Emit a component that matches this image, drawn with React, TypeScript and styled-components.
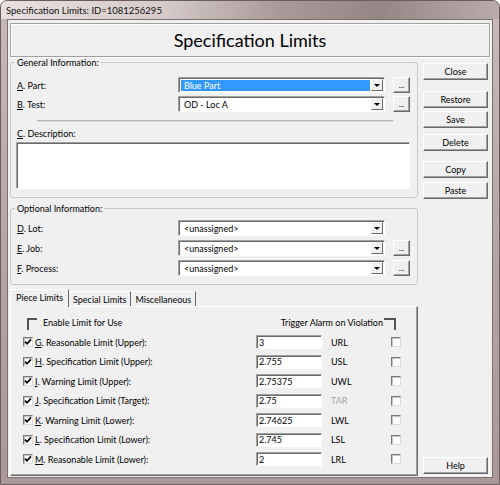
import styled, { createGlobalStyle } from 'styled-components';

const GlobalStyle = createGlobalStyle`
  html, body { margin: 0; padding: 0; background: #fff; }
  body { font-family: Lato, "Liberation Sans", sans-serif; font-size: 9px; color: #000; }
  * { box-sizing: border-box; }
`

const Window = styled.div`
  width: 500px;
  height: 485px;
  display: flex;
  flex-direction: column;
  border: 1px solid #6b5d5c;
  border-radius: 7px 7px 0 0;
  overflow: hidden;
  background: linear-gradient(to bottom, #c7bab9, #b4a4a3 55%, #a99897);
`

const TitleBar = styled.div`
  height: 18px;
  flex: none;
  display: flex;
  align-items: center;
  padding-left: 5px;
  font-size: 9.5px;
  color: #111;
  background: linear-gradient(to right, rgba(240,234,232,.8) 0%, rgba(222,214,212,.65) 32%, rgba(140,122,122,.5) 56%, rgba(100,84,84,.5) 76%, rgba(165,150,150,.4) 100%);
`

const Frame = styled.div`
  flex: 1;
  display: flex;
  padding: 0 6px 6px;
`

const Client = styled.div`
  flex: 1;
  display: flex;
  flex-direction: column;
  background: #f0f0f0;
  border: 1px solid #7d6f6e;
`

const Header = styled.header`
  margin: 3px 2px 0;
  height: 34px;
  flex: none;
  display: flex;
  align-items: center;
  justify-content: center;
  border: 1px solid #a0a0a0;
  box-shadow: inset 1px 1px #fff, 1px 1px #fff;
  > h1 {
    margin: 0;
    font-size: 18px;
    font-weight: 400;
  }
`

const Body = styled.div`
  flex: 1;
  display: flex;
  gap: 5px;
  padding: 0 4px 1px 2px;
`

const LeftCol = styled.div`
  width: 408px;
  display: flex;
  flex-direction: column;
`

const RightCol = styled.div`
  width: 65px;
  display: flex;
  flex-direction: column;
`

const Button = styled.button<{ $top?: number }>`
  height: 17px;
  margin: ${p => (p.$top ?? 0)}px 0 0;
  padding: 0;
  font: inherit;
  background: #f0f0f0;
  border: 1px solid;
  border-color: #fff #696969 #696969 #fff;
  box-shadow: inset -1px -1px #a0a0a0;
  &:last-child { margin-top: auto; margin-bottom: 2px; }
`

const Group = styled.fieldset<{ $top?: number }>`
  margin: ${p => (p.$top ?? 0)}px 0 0;
  padding: 0 7px 8px 6px;
  border: 1px solid #c9c9c9;
  border-radius: 3px;
  min-width: 0;
`

const Legend = styled.legend`
  padding: 0 2px;
  margin-left: -2px;
  line-height: 11px;
`

const FieldRow = styled.div<{ $top?: number }>`
  display: flex;
  align-items: center;
  height: 16px;
  margin-top: ${p => (p.$top ?? 0)}px;
  > label {
    width: 161px;
  }
`

const ComboBox = styled.div`
  width: 207px;
  height: 16px;
  display: flex;
  background: #fff;
  border: 1px solid;
  border-color: #a0a0a0 #fff #fff #a0a0a0;
  box-shadow: inset 1px 1px #696969;
  padding: 1px;
`

const ComboValue = styled.div<{ $selected?: boolean }>`
  flex: 1;
  display: flex;
  align-items: center;
  padding-left: 3px;
  margin: 1px 1px 0 1px;
  background: ${p => (p.$selected ? '#3399ff' : 'transparent')};
  color: ${p => (p.$selected ? '#fff' : '#000')};
`

const DropArrow = styled.span`
  width: 12px;
  display: flex;
  align-items: center;
  justify-content: center;
  background: #f0f0f0;
  border: 1px solid;
  border-color: #f8f8f8 #696969 #696969 #f8f8f8;
  &::after {
    content: '';
    border-left: 3px solid transparent;
    border-right: 3px solid transparent;
    border-top: 3px solid #000;
    margin-top: 1px;
  }
`

const Ellipsis = styled.button<{ $hidden?: boolean }>`
  width: 17px;
  height: 16px;
  margin-left: 8px;
  padding: 0 0 3px;
  font: inherit;
  font-size: 8px;
  line-height: 8px;
  display: flex;
  align-items: flex-end;
  justify-content: center;
  background: #f0f0f0;
  border: 1px solid;
  border-color: #fff #696969 #696969 #fff;
  box-shadow: inset -1px -1px #a0a0a0;
  visibility: ${p => (p.$hidden ? 'hidden' : 'visible')};
`

const Separator = styled.hr`
  margin: 8px 17px 0 20px;
  height: 2px;
  border: none;
  border-top: 1px solid #b4b4b4;
  border-bottom: 1px solid #d8d8d8;
`

const DescLabel = styled.div`
  margin-top: 6px;
  line-height: 11px;
`

const DescBox = styled.div`
  margin: 3px 0 0 -1px;
  width: 394px;
  height: 47px;
  background: #fff;
  border: 1px solid;
  border-color: #a0a0a0 #fff #fff #a0a0a0;
  box-shadow: inset 1px 1px #696969;
`

const TabStrip = styled.div`
  margin-top: 4px;
  display: flex;
  align-items: flex-end;
  height: 17px;
  position: relative;
  z-index: 1;
`

const Tab = styled.div<{ $active?: boolean }>`
  height: ${p => (p.$active ? 18 : 15)}px;
  padding: 0 ${p => (p.$active ? 5 : 4)}px;
  display: flex;
  align-items: center;
  background: #f0f0f0;
  border-top: 1px solid #fff;
  border-left: ${p => (p.$active ? '1px solid #fff' : 'none')};
  border-right: 1px solid #696969;
  margin-bottom: ${p => (p.$active ? -1 : 0)}px;
  padding-bottom: ${p => (p.$active ? 2 : 0)}px;
`

const Panel = styled.div`
  flex: 1;
  padding: 9px 0 0 12px;
  border: 1px solid;
  border-color: #fff #696969 #696969 #fff;
  box-shadow: inset -1px -1px #a0a0a0;
`

const Heading = styled.div`
  width: 378px;
  height: 14px;
  display: flex;
  justify-content: space-between;
  align-items: flex-start;
`

const HeadingText = styled.span<{ $side: 'left' | 'right' }>`
  display: flex;
  align-items: flex-start;
  flex-direction: ${p => (p.$side === 'left' ? 'row' : 'row-reverse')};
  margin: ${p => (p.$side === 'left' ? '0 0 0 4px' : '0 5px 0 0')};
  line-height: 11px;
  padding-top: 1px;
`

const Bracket = styled.i<{ $side: 'left' | 'right' }>`
  width: ${p => (p.$side === 'left' ? 10 : 12)}px;
  height: 12px;
  margin: 1px ${p => (p.$side === 'left' ? '6px 0 0' : '0 0 1px')};
  border-top: 2px solid #555;
  ${p => (p.$side === 'left' ? 'border-left' : 'border-right')}: 2px solid #555;
`

const Rows = styled.div`
  margin-top: 5px;
  display: flex;
  flex-direction: column;
  gap: 5.5px;
`

const LimitRow = styled.div`
  display: grid;
  grid-template-columns: 12px 221px 66px 69px 10px;
  align-items: center;
  height: 14px;
`

const Check = styled.span`
  width: 10px;
  height: 10px;
  display: block;
  background: #fff;
  border: 1px solid;
  border-color: #7a7a7a #dcdcdc #dcdcdc #7a7a7a;
  box-shadow: inset 1px 1px #c4c4c4;
  > svg { display: block; }
`

const ValueBox = styled.div`
  height: 14px;
  padding-left: 2px;
  display: flex;
  align-items: center;
  background: #fff;
  border: 1px solid;
  border-color: #a0a0a0 #fff #fff #a0a0a0;
  box-shadow: inset 1px 1px #696969;
`

const Code = styled.span<{ $disabled?: boolean }>`
  padding-left: 9px;
  color: ${p => (p.$disabled ? '#a6a6a6' : '#000')};
`

function CheckBox({ checked }: { checked?: boolean }) {
  return (
    <Check>
      {checked && (
        <svg width="8" height="8" viewBox="0 0 8 8">
          <path d="M1 3.6 L3 5.8 L7 1.4" fill="none" stroke="#000" strokeWidth="1.6" />
        </svg>
      )}
    </Check>
  )
}

function Combo({ value, selected }: { value: string; selected?: boolean }) {
  return (
    <ComboBox>
      <ComboValue $selected={selected}>{value}</ComboValue>
      <DropArrow />
    </ComboBox>
  )
}

const limits = [
  { key: 'G', label: 'Reasonable Limit (Upper):', value: '3', code: 'URL' },
  { key: 'H', label: 'Specification Limit (Upper):', value: '2.755', code: 'USL' },
  { key: 'I', label: 'Warning Limit (Upper):', value: '2.75375', code: 'UWL' },
  { key: 'J', label: 'Specification Limit (Target):', value: '2.75', code: 'TAR', disabled: true },
  { key: 'K', label: 'Warning Limit (Lower):', value: '2.74625', code: 'LWL' },
  { key: 'L', label: 'Specification Limit (Lower):', value: '2.745', code: 'LSL' },
  { key: 'M', label: 'Reasonable Limit (Lower):', value: '2', code: 'LRL' },
]

export default function App() {
  return (
    <>
      <GlobalStyle />
      <Window>
        <TitleBar>Specification Limits: ID=1081256295</TitleBar>
        <Frame>
          <Client>
            <Header>
              <h1>Specification Limits</h1>
            </Header>
            <Body>
              <LeftCol>
                <Group>
                  <Legend>General Information:</Legend>
                  <FieldRow $top={9}>
                    <label><u>A</u>. Part:</label>
                    <Combo value="Blue Part" selected />
                    <Ellipsis>...</Ellipsis>
                  </FieldRow>
                  <FieldRow $top={3}>
                    <label><u>B</u>. Test:</label>
                    <Combo value="OD - Loc A" />
                    <Ellipsis>...</Ellipsis>
                  </FieldRow>
                  <Separator />
                  <DescLabel><u>C</u>. Description:</DescLabel>
                  <DescBox />
                </Group>
                <Group $top={5}>
                  <Legend>Optional Information:</Legend>
                  <FieldRow $top={6}>
                    <label><u>D</u>. Lot:</label>
                    <Combo value="<unassigned>" />
                    <Ellipsis $hidden>...</Ellipsis>
                  </FieldRow>
                  <FieldRow $top={4}>
                    <label><u>E</u>. Job:</label>
                    <Combo value="<unassigned>" />
                    <Ellipsis>...</Ellipsis>
                  </FieldRow>
                  <FieldRow $top={4}>
                    <label><u>F</u>. Process:</label>
                    <Combo value="<unassigned>" />
                    <Ellipsis>...</Ellipsis>
                  </FieldRow>
                </Group>
                <TabStrip>
                  <Tab $active>Piece Limits</Tab>
                  <Tab>Special Limits</Tab>
                  <Tab>Miscellaneous</Tab>
                </TabStrip>
                <Panel>
                  <Heading>
                    <HeadingText $side="left"><Bracket $side="left" />Enable Limit for Use</HeadingText>
                    <HeadingText $side="right"><Bracket $side="right" />Trigger Alarm on Violation</HeadingText>
                  </Heading>
                  <Rows>
                    {limits.map(l => (
                      <LimitRow key={l.key}>
                        <CheckBox checked />
                        <span><u>{l.key}</u>. {l.label}</span>
                        <ValueBox>{l.value}</ValueBox>
                        <Code $disabled={l.disabled}>{l.code}</Code>
                        <CheckBox />
                      </LimitRow>
                    ))}
                  </Rows>
                </Panel>
              </LeftCol>
              <RightCol>
                <Button $top={6}>Close</Button>
                <Button $top={11}>Restore</Button>
                <Button $top={3}>Save</Button>
                <Button $top={6}>Delete</Button>
                <Button $top={10}>Copy</Button>
                <Button $top={4}>Paste</Button>
                <Button>Help</Button>
              </RightCol>
            </Body>
          </Client>
        </Frame>
      </Window>
    </>
  )
}
